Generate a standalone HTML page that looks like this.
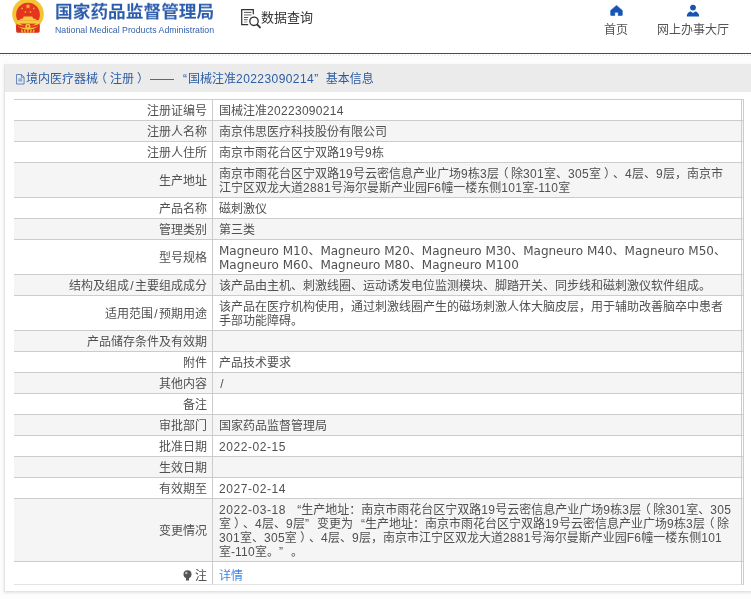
<!DOCTYPE html>
<html lang="zh-CN">
<head>
<meta charset="utf-8">
<title>国家药品监督管理局 数据查询</title>
<style>
*{box-sizing:border-box;margin:0;padding:0}
html,body{width:751px;height:599px;overflow:hidden;background:#fdfdfd}
body{position:relative;font-family:"Liberation Sans","Noto Sans CJK SC",sans-serif;font-size:12px;color:#505050;text-spacing-trim:space-all}
.abs{position:absolute;white-space:nowrap;will-change:transform}
#top{position:absolute;left:0;top:0;width:751px;height:53px;background:#fff}
#blue{position:absolute;left:0;top:53px;width:751px;height:1px;background:#25517f}
#dots{position:absolute;left:0;top:55px;width:751px;height:1px;
 background-image:repeating-linear-gradient(90deg,#dcdcdc 0 1px,transparent 1px 3px);opacity:.8}
#logo-t{left:54.500px;top:.3px;font-size:17.7px;line-height:26px;font-weight:bold;color:#2b5cab;letter-spacing:0;transform:scaleY(.93);transform-origin:0 0}
#logo-s{left:55px;top:24px;font-size:8.75px;line-height:12px;color:#3562ad}
#dq{left:261px;top:7.500px;font-size:13px;line-height:19px;color:#333;letter-spacing:0}
#home{left:604px;top:21px;font-size:12px;line-height:18px;color:#555}
#hall{left:657px;top:21px;font-size:12px;line-height:18px;color:#555}
#panel{position:absolute;left:4px;top:64px;width:760px;height:528px;background:#fff;border:1px solid #e3e3e3;border-top-color:#ebebeb;box-shadow:0 1px 3px rgba(0,0,0,.10)}
#phead{position:absolute;left:0;top:0;width:760px;height:27px;background:#ebebeb}
#ptitle{left:22px;top:5px;font-size:12px;line-height:18px;color:#2a5ca3}
#ptitle span{display:inline-block}
.pl{position:relative;left:-3px}
.pr{position:relative;left:3px}
table{will-change:transform;position:absolute;left:14px;top:99px;width:730px;border-collapse:separate;border-spacing:0;border-top:1px solid #ccc;border-right:1px solid #ccc;table-layout:fixed}
td{font-size:12px;line-height:14px;padding:4px 2px 2px 6px;border-bottom:1px solid #ccc;border-right:1px solid #ccc;vertical-align:middle;color:#505050;height:21px}
td.l{text-align:right;width:199px;padding:4px 5px 2px 2px}
td.e{width:1px;padding:0!important;border-right:0}
td.v{width:529px}
tr.g td{background:#f5f5f5}
tr.m td{padding-top:4px;padding-bottom:2px}
tr.last td{height:23px;border-bottom-color:#e2e2e2;padding-top:6px;padding-bottom:1px}
a{color:#3f86e0;text-decoration:none}
.n{letter-spacing:.3px}
.d{letter-spacing:.55px}
.ql,.qr{display:inline-block;width:12px}
.ql{text-align:right}
.qr{text-align:left}
.sl{padding:0 1.3px}
.tl{position:relative;left:-2.500px}
.tr{position:relative;left:3px}
.mag .n{letter-spacing:0}
.mag{font-family:"DejaVu Sans","Noto Sans CJK SC",sans-serif}
</style>
</head>
<body>
<div id="top"></div>
<div id="blue"></div>
<div id="dots"></div>

<svg class="abs" id="emblem" style="left:0;top:0" width="60" height="40" viewBox="0 0 60 40">
 <path d="M15.800 22.500L40 22.500L39.600 31.600Q39.500 32.700 38.400 32.700L17.400 32.700Q16.300 32.700 16.200 31.600z" fill="#d92f1f"/>
 <circle cx="28" cy="14" r="15.800" fill="#f4c435"/>
 <circle cx="28" cy="14.600" r="11.900" fill="#e4351f"/>
 <path d="M17.500 20.200h21v3.400h-21z" fill="#f5cb3f"/>
 <path d="M19.200 20.300h17.600l-1.500-1.500H20.700z" fill="#f5cb3f"/>
 <path d="M22.500 18.900h11l-1.300-2.300h-8.400z" fill="#f5cb3f"/>
 <path d="M16.400 23.500c3 3.200 20.200 3.200 23.200 0l-.8 2.400c-4 2.600-17.600 2.600-21.600 0z" fill="#e4351f"/>
 <path d="M28 3.600l.75 1.900h2l-1.600 1.250.6 1.950L28 7.550l-1.750 1.150.6-1.950-1.600-1.250h2z" fill="#f6b53a"/>
 <circle cx="22.100" cy="8.400" r=".9" fill="#f3a336"/><circle cx="33.800" cy="8.400" r=".9" fill="#f3a336"/>
 <circle cx="25.400" cy="12" r=".9" fill="#f3a336"/><circle cx="30.500" cy="12" r=".9" fill="#f3a336"/>
 <circle cx="27.900" cy="26.300" r="2.600" fill="#f4c435"/><circle cx="27.900" cy="26.300" r="1" fill="#e0452a"/>
 <path d="M21.500 29.800l1.200 2.800M24.500 29.800l.8 2.800M31.300 29.800l-.8 2.800M34.300 29.800l-1.200 2.800M27.900 29.500v3.100" stroke="#f4c435" stroke-width="1.300" fill="none"/>
</svg>
<div class="abs" id="logo-t">国家药品监督管理局</div>
<div class="abs" id="logo-s">National Medical Products Administration</div>

<svg class="abs" style="left:240px;top:7px" width="24" height="24" viewBox="0 0 24 24" fill="none" stroke="#333">
 <path d="M13.300 7.200V2.500H1.700v15.200h6.500" stroke-width="1.250"/>
 <path d="M4 5.400h7.400M4 10.500h4.200" stroke="#555" stroke-width="1"/>
 <path d="M4 7.900h7.400" stroke="#aaa" stroke-width="1.800"/>
 <path d="M4 12.700h3.600" stroke="#555" stroke-width="1"/>
 <path d="M4 15h3.400" stroke="#999" stroke-width="1"/>
 <circle cx="14" cy="14.300" r="4.200" stroke-width="1.350" fill="#fff"/>
 <path d="M17.300 17.700l2.700 2.700" stroke-width="1.900" stroke-linecap="round"/>
</svg>
<div class="abs" id="dq">数据查询</div>

<svg class="abs" style="left:610px;top:5px" width="13" height="11" viewBox="0 0 13 11"><path d="M6.500 0.400L12.300 5.400v4.600q0 .6-.6.600H8.200V7.300H4.800v3.300H1.300q-.6 0-.6-.6V5.400z" fill="#1554b4" stroke="#1554b4" stroke-width=".6" stroke-linejoin="round"/></svg>
<div class="abs" id="home">首页</div>
<svg class="abs" style="left:686px;top:4px" width="14" height="13" viewBox="0 0 14 13"><circle cx="7" cy="3.600" r="2.900" fill="#1554b4"/><path d="M0.800 12.500c0-3.500 2.500-5 4-5l2.200 1.500 2.200-1.500c1.500 0 4 1.500 4 5z" fill="#1554b4"/></svg>
<div class="abs" id="hall">网上办事大厅</div>

<div id="panel"><div id="phead"></div></div>
<svg class="abs" style="left:15.500px;top:73.500px" width="9" height="11" viewBox="0 0 10 12" fill="none" stroke="#3f6db0" stroke-width=".9"><path d="M0.500 0.500h5.500l3 3v7.500h-8.500z"/><path d="M6 0.500v3h3M2.500 5.500h4.500M2.500 7.500h4.500"/></svg>
<div class="abs" id="ptitle" style="left:26px;top:70px">境内医疗器械<span class="pl">（</span>注册<span class="pr">）</span><span style="width:4px"></span>——<span style="width:9px"></span>“<span style="width:1px"></span>国械注准<span class="n" style="display:inline;letter-spacing:.42px">20223090214</span>”<span style="width:7.500px"></span>基本信息</div>

<table cellspacing="0">
<tr><td class="l">注册证编号</td><td class="v">国械注准<span class="n">20223090214</span></td><td class="e"></td></tr>
<tr class="g"><td class="l">注册人名称</td><td>南京伟思医疗科技股份有限公司</td><td class="e"></td></tr>
<tr><td class="l">注册人住所</td><td>南京市雨花台区宁双路<span class="n">19</span>号<span class="n">9</span>栋</td><td class="e"></td></tr>
<tr class="g m"><td class="l">生产地址</td><td>南京市雨花台区宁双路<span class="n">19</span>号云密信息产业广场<span class="n">9</span>栋<span class="n">3</span>层<span class="tl">（</span>除<span class="n">301</span>室、<span class="n">305</span>室<span class="tr">）</span>、<span class="n">4</span>层、<span class="n">9</span>层，南京市<br>江宁区双龙大道<span class="n">2881</span>号海尔曼斯产业园F<span class="n">6</span>幢一楼东侧<span class="n">101</span>室-<span class="n">110</span>室</td><td class="e"></td></tr>
<tr><td class="l">产品名称</td><td>磁刺激仪</td><td class="e"></td></tr>
<tr class="g"><td class="l">管理类别</td><td>第三类</td><td class="e"></td></tr>
<tr class="m"><td class="l">型号规格</td><td class="mag">Magneuro M<span class="n">10</span>、Magneuro M<span class="n">20</span>、Magneuro M<span class="n">30</span>、Magneuro M<span class="n">40</span>、Magneuro M<span class="n">50</span>、<br>Magneuro M<span class="n">60</span>、Magneuro M<span class="n">80</span>、Magneuro M<span class="n">100</span></td><td class="e"></td></tr>
<tr class="g"><td class="l">结构及组成<span class="sl">/</span>主要组成成分</td><td>该产品由主机、刺激线圈、运动诱发电位监测模块、脚踏开关、同步线和磁刺激仪软件组成。</td><td class="e"></td></tr>
<tr class="m"><td class="l">适用范围<span class="sl">/</span>预期用途</td><td>该产品在医疗机构使用，通过刺激线圈产生的磁场刺激人体大脑皮层，用于辅助改善脑卒中患者<br>手部功能障碍。</td><td class="e"></td></tr>
<tr class="g"><td class="l">产品储存条件及有效期</td><td></td><td class="e"></td></tr>
<tr><td class="l">附件</td><td>产品技术要求</td><td class="e"></td></tr>
<tr class="g"><td class="l">其他内容</td><td><span class="sl">/</span></td><td class="e"></td></tr>
<tr><td class="l">备注</td><td></td><td class="e"></td></tr>
<tr class="g"><td class="l">审批部门</td><td>国家药品监督管理局</td><td class="e"></td></tr>
<tr><td class="l">批准日期</td><td><span class="d">2022-02-15</span></td><td class="e"></td></tr>
<tr class="g"><td class="l">生效日期</td><td></td><td class="e"></td></tr>
<tr><td class="l">有效期至</td><td><span class="d">2027-02-14</span></td><td class="e"></td></tr>
<tr class="g m"><td class="l">变更情况</td><td><span class="d">2022-03-18</span> <span class="ql">“</span>生产地址：南京市雨花台区宁双路<span class="n">19</span>号云密信息产业广场<span class="n">9</span>栋<span class="n">3</span>层<span class="tl">（</span>除<span class="n">301</span>室、<span class="n">305</span><br>室<span class="tr">）</span>、<span class="n">4</span>层、<span class="n">9</span>层<span class="qr">”</span>变更为<span class="ql">“</span>生产地址：南京市雨花台区宁双路<span class="n">19</span>号云密信息产业广场<span class="n">9</span>栋<span class="n">3</span>层<span class="tl">（</span>除<br><span class="n">301</span>室、<span class="n">305</span>室<span class="tr">）</span>、<span class="n">4</span>层、<span class="n">9</span>层，南京市江宁区双龙大道<span class="n">2881</span>号海尔曼斯产业园F<span class="n">6</span>幢一楼东侧<span class="n">101</span><br>室-<span class="n">110</span>室。<span class="qr">”</span>。</td><td class="e"></td></tr>
<tr class="last"><td class="l"><svg width="9" height="11" viewBox="0 0 9 11" style="vertical-align:-1px;margin-right:2.500px"><circle cx="4.500" cy="4.300" r="4" fill="#555"/><rect x="3" y="8" width="3" height="2.500" fill="#555"/><circle cx="3.300" cy="3" r="1.200" fill="#bbb"/></svg>注</td><td><a>详情</a></td><td class="e"></td></tr>
</table>
</body>
</html>
